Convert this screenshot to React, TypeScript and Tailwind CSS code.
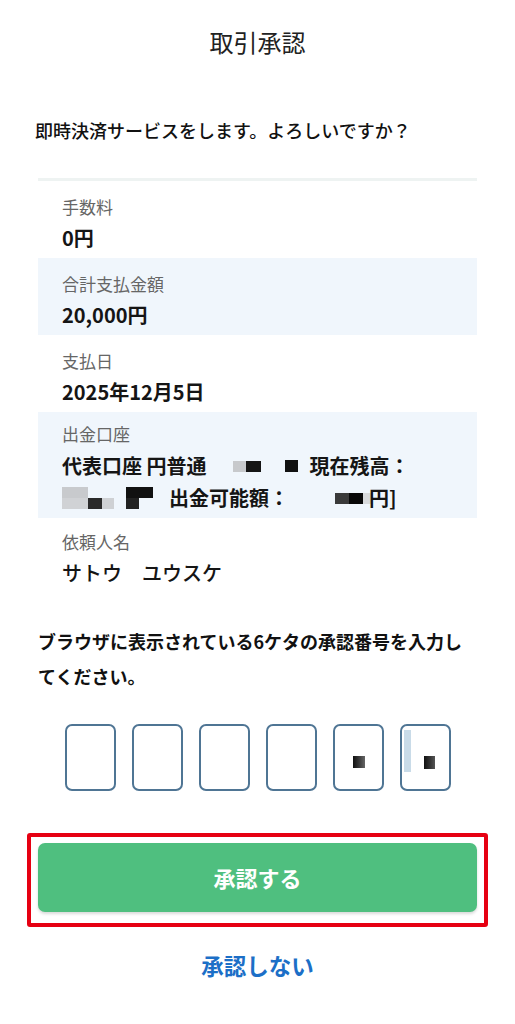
import React from 'react';

const font = { fontFamily: '"Noto Sans CJK JP", "Noto Sans", sans-serif' };

function Block({ className }: { className: string }) {
  return <span className={`inline-block align-middle ${className}`} />;
}

function Row({
  label,
  children,
  shaded,
  className,
}: {
  label: string;
  children: React.ReactNode;
  shaded?: boolean;
  className?: string;
}) {
  return (
    <div className={`px-6 ${shaded ? 'bg-[#f0f6fc]' : 'bg-white'} ${className ?? 'pt-[14px] pb-[5px]'}`}>
      <div className="text-[17px] leading-[24px] text-[#666666]">{label}</div>
      <div className="mt-[4px] text-[20px] leading-[30px] font-bold text-[#151515]">{children}</div>
    </div>
  );
}

export default function App() {
  const codes = [0, 1, 2, 3, 4, 5];

  return (
    <div className="min-h-[1024px] w-[515px] bg-white text-[#1a1a1a]" style={font}>
      {/* Title */}
      <div className="pt-[26px] text-center text-[24px] leading-[32px] font-normal text-[#222]">
        取引承認
      </div>

      <div className="px-[38px]">
        <p className="mt-[58px] -ml-[3px] text-[18px] leading-[28px] font-medium text-[#111]">
          即時決済サービスをします。よろしいですか？
        </p>

        {/* Detail list */}
        <div className="mt-[34px] border-t-[3px] border-[#eef3f2]">
          <Row label="手数料">0円</Row>
          <Row label="合計支払金額" shaded>20,000円</Row>
          <Row label="支払日">2025年12月5日</Row>
          <div className="px-6 pt-[10px] pb-[4px] bg-[#f0f6fc]">
            <div className="text-[17px] leading-[24px] text-[#666666]">出金口座</div>
            <div className="mt-[4px] text-[20px] leading-[32px] font-bold text-[#151515]">
              <div className="flex items-center whitespace-nowrap">
                <span>代表口座 円普通</span>
                <Block className="ml-[26px] w-[13px] h-[11px] bg-[#c7c9cc]" />
                <Block className="w-[15px] h-[11px] bg-[#151515]" />
                <Block className="ml-[24px] w-[13px] h-[12px] bg-[#111]" />
                <span className="ml-[12px]">現在残高：</span>
              </div>
              <div className="flex items-center whitespace-nowrap">
                <span className="inline-flex flex-col">
                  <span className="flex">
                    <Block className="w-[26px] h-[11px] bg-[#c8cacd]" />
                  </span>
                  <span className="flex">
                    <Block className="w-[26px] h-[11px] bg-[#d0d2d5]" />
                    <Block className="w-[14px] h-[11px] bg-[#2a2a2a]" />
                    <Block className="w-[12px] h-[11px] bg-[#cfd1d4]" />
                  </span>
                </span>
                <span className="ml-[12px] inline-flex flex-col">
                  <Block className="w-[27px] h-[11px] bg-[#111]" />
                  <Block className="w-[13px] h-[11px] bg-[#222]" />
                </span>
                <span className="ml-[16px]">出金可能額：</span>
                <Block className="ml-[46px] w-[14px] h-[11px] bg-[#3a3a3a]" />
                <Block className="w-[14px] h-[11px] bg-[#080808]" />
                <Block className="w-[8px] h-[11px] bg-[#d8dadc]" />
                <span className="-ml-[2px]">円]</span>
              </div>
            </div>
          </div>
          <Row label="依頼人名" className="pt-[12px] pb-[6px]">
            <span className="font-medium">サトウ　ユウスケ</span>
          </Row>
        </div>

        {/* Instruction */}
        <p className="mt-[30px] text-[18px] leading-[35px] font-semibold text-[#111]">
          ブラウザに表示されている6ケタの承認番号を入力してください。
        </p>

        {/* Code boxes */}
        <div className="mt-[30px] flex justify-center gap-[16px]">
          {codes.map((i) => (
            <div
              key={i}
              className="relative w-[51px] h-[67px] rounded-[7px] border-2 border-[#4f7594] bg-white"
            >
              {i === 4 && (
                <span className="absolute left-[18px] top-[30px] w-[12px] h-[12px] bg-gradient-to-r from-[#111] to-[#666]" />
              )}
              {i === 5 && (
                <>
                  <span className="absolute left-[2px] top-[4px] w-[7px] h-[42px] bg-[#c9dbe8]" />
                  <span className="absolute left-[22px] top-[30px] w-[11px] h-[13px] bg-gradient-to-r from-[#111] to-[#555]" />
                </>
              )}
            </div>
          ))}
        </div>
      </div>

      {/* Approve button with highlight */}
      <div className="mx-[27px] mt-[42px] border-4 border-[#e60012] rounded-[3px] px-[7px] pt-[6px] pb-[11px]">
        <button className="w-full h-[69px] rounded-[7px] bg-[#4fbf7f] shadow-[0_2px_3px_rgba(0,0,0,0.15)] text-white text-[22px] font-semibold">
          承認する
        </button>
      </div>

      <div className="mt-[23px] text-center text-[22.5px] leading-[30px] font-bold text-[#1c6fc7]">
        承認しない
      </div>
    </div>
  );
}
